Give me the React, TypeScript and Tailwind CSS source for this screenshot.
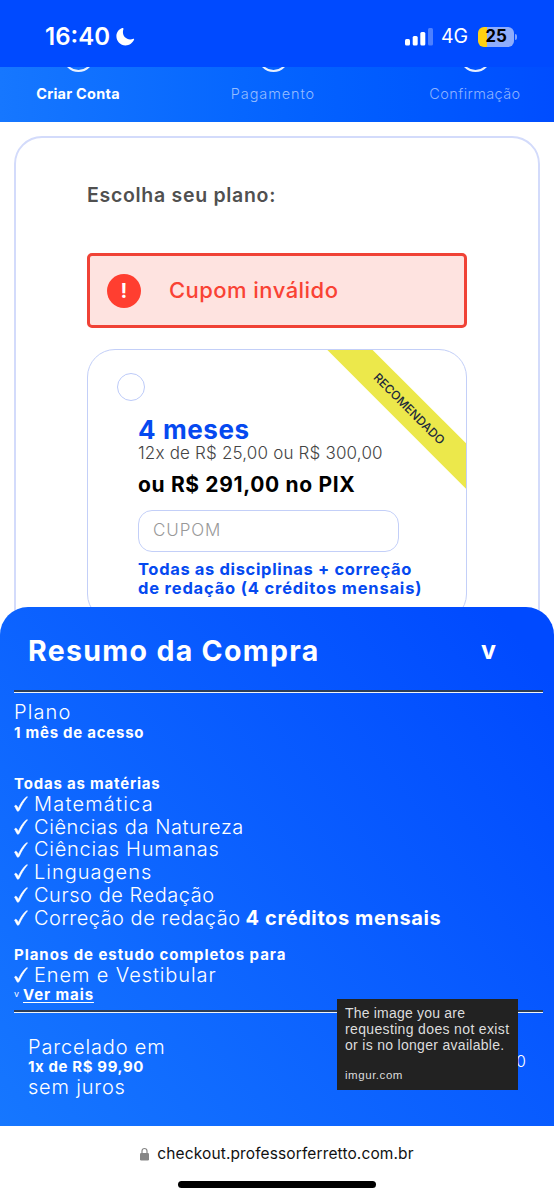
import { clsx } from 'clsx';

const STEPS = [
  { label: 'Criar Conta', className: 'font-bold text-white tracking-[0.25px]' },
  { label: 'Pagamento', className: 'font-light text-[#94bcff] tracking-[0.9px]' },
  { label: 'Confirmação', className: 'font-light text-[#8cb2ff] tracking-[0.4px] pl-1.5' },
];

const SUBJECTS = [
  { name: 'Matemática', tracking: 'tracking-[1.2px]' },
  { name: 'Ciências da Natureza', tracking: 'tracking-[0.6px]' },
  { name: 'Ciências Humanas', tracking: 'tracking-[0.75px]' },
  { name: 'Linguagens', tracking: 'tracking-[1px]' },
  { name: 'Curso de Redação', tracking: 'tracking-[0.55px]' },
];

function StatusBar() {
  return (
    <div className="flex h-[67px] shrink-0 items-center bg-[#004aff] pt-[7px] pl-[45px] text-white">
      <span className="w-[70px] text-[24px] font-semibold">16:40</span>
      <svg className="h-[20px] w-[20px]" viewBox="0 0 20 20" fill="currentColor">
        <path d="M7.3 1.1C3.9 2.2 1.4 5.4 1.4 9.3c0 5 4 9.1 9.1 9.1 3.9 0 7.3-2.5 8.6-5.9.2-.6-.3-1-.8-.8-1 .5-2 .7-3.1.7-4.2 0-7.3-3.1-7.3-7.3 0-1 .2-2 .5-2.9.3-.7-.4-1.3-1.1-1.1z" />
      </svg>
      <svg className="ml-[270px] h-[18px] w-[28px]" viewBox="0 0 28 18" fill="currentColor">
        <rect x="0" y="11" width="5" height="6.5" rx="1.5" />
        <rect x="7.7" y="8" width="5" height="9.5" rx="1.5" />
        <rect x="15.3" y="4" width="5" height="13.5" rx="1.5" />
        <rect x="23" y="0" width="5" height="17.5" rx="1.5" opacity=".3" />
      </svg>
      <span className="ml-[8px] w-[37px] text-[19.5px]">4G</span>
      <div className="flex h-[20px] w-[36px] items-center justify-center rounded-[6px] bg-linear-to-r from-[#ffd012] from-25% to-[#8fadfb] to-25% text-[17px] font-bold text-black">
        25
      </div>
      <div className="ml-px h-[6px] w-[2px] rounded-r-full bg-[#7fa4ff]" />
    </div>
  );
}

function Steps() {
  return (
    <div className="grid h-[55px] shrink-0 grid-cols-[156px_234px_164px] overflow-hidden bg-linear-to-r from-[#1677ff] to-[#004dff]">
      {STEPS.map((step) => (
        <div key={step.label} className={clsx('flex flex-col items-center text-[14.5px]', step.className)}>
          <div className="-mt-[26px] h-[31px] w-[31px] shrink-0 rounded-full border-2 border-white/90" />
          <span className="mt-[12px] leading-[20px]">{step.label}</span>
        </div>
      ))}
    </div>
  );
}

function PlanCard() {
  return (
    <div className="relative mt-[21px] h-[273px] overflow-hidden rounded-[28px] border border-[#c3cff8] pl-[50px]">
      <div className="mt-[23px] -ml-[21px] h-[28px] w-[28px] rounded-full border border-[#bccaf8]" />
      <h2 className="mt-[14px] text-[26px] leading-[30px] font-bold tracking-[0.6px] text-[#0549f0]">4 meses</h2>
      <p className="text-[17px] leading-[17px] font-light tracking-[0.18px] text-[#444]">12x de R$ 25,00 ou R$ 300,00</p>
      <p className="mt-[10px] text-[21px] leading-[26px] font-bold tracking-[0.65px] text-black">ou R$ 291,00 no PIX</p>
      <div className="mt-[12px] flex h-[42px] w-[261px] items-center rounded-[14px] border border-[#c3cff8] pl-[14px] text-[17px] font-light tracking-[0.9px] text-[#999]">
        CUPOM
      </div>
      <p className="mt-[8px] text-[16.5px] leading-[18.5px] font-bold whitespace-nowrap text-[#0549f0]">
        <span className="block tracking-[0.65px]">Todas as disciplinas + correção</span>
        <span className="block tracking-[0.82px]">de redação (4 créditos mensais)</span>
      </p>
      <div className="absolute top-[43px] left-[211px] h-[32px] w-[220px] rotate-45 bg-[#ece84b] text-center text-[12px] leading-[32px] font-medium text-[#1c2a3c]">
        RECOMENDADO
      </div>
    </div>
  );
}

function Check() {
  return (
    <svg
      className="mr-[6px] h-[16px] w-[14px] shrink-0"
      viewBox="0 0 14 16"
      fill="currentColor"
      stroke="currentColor"
      strokeWidth=".7"
      strokeLinejoin="round"
    >
      <path d="M.6 10c.8-.9 1.700-.8 2.300.1l1.500 2.300C6.400 7.900 9 4 12.200 1.100c.5-.4 1.100-.4 1.300-.3-3.500 4.200-6.200 8.700-8.300 13.500-.3.800-1.700 1.200-2.100.5z" />
    </svg>
  );
}

function Rule() {
  return <div className="ml-[14px] h-[3px] w-[529px] border-t-2 border-b border-t-[#2b3d58] border-b-[#eef3fa]" />;
}

function Summary() {
  return (
    <section className="relative z-10 -mt-[15px] h-[519px] shrink-0 rounded-t-[28px] bg-[linear-gradient(52deg,#1677ff,#004aff_94%)] text-white">
      <div className="flex h-[83px] items-center justify-between pt-[5px] pr-[58px] pl-[28px] font-bold">
        <h2 className="text-[28.5px] tracking-[1.3px]">Resumo da Compra</h2>
        <span className="text-[25px]">v</span>
      </div>
      <Rule />
      <div className="pl-[14px] text-[20px] font-light">
        <p className="mt-[8px] leading-[22px] tracking-[1.1px]">Plano</p>
        <p className="text-[15px] leading-[19px] font-bold tracking-[0.75px]">1 mês de acesso</p>
        <p className="mt-[32px] text-[15px] leading-[20px] font-bold tracking-[0.8px]">Todas as matérias</p>
        <ul className="-mt-px leading-[22.7px]">
          {SUBJECTS.map((subject) => (
            <li key={subject.name} className={clsx('flex items-center', subject.tracking)}>
              <Check />
              {subject.name}
            </li>
          ))}
          <li className="flex items-center tracking-[0.5px]">
            <Check />
            Correção de redação <b className="ml-[5px] font-bold tracking-[0.6px]">4 créditos mensais</b>
          </li>
        </ul>
        <p className="mt-[16px] text-[15px] leading-[20px] font-bold tracking-[0.95px]">Planos de estudo completos para</p>
        <p className="flex items-center leading-[20px] tracking-[0.9px]">
          <Check />
          Enem e Vestibular
        </p>
        <p className="flex text-[15px] leading-[20px] font-bold">
          <span className="w-[9px] text-[9px] leading-[17px] font-normal">v</span>
          <span className="tracking-[0.9px] underline underline-offset-2">Ver mais</span>
        </p>
      </div>
      <div className="mt-[5px]">
        <Rule />
      </div>
      <div className="flex justify-between pr-[28px] pl-[28px] text-[20px] font-light">
        <div className="mt-[24px] leading-[20px]">
          <p className="tracking-[0.85px]">Parcelado em</p>
          <p className="text-[15px] font-bold tracking-[0.6px]">1x de R$ 99,90</p>
          <p className="tracking-[0.8px]">sem juros</p>
        </div>
        <span className="mt-[38px] text-[16px] leading-[20px]">0</span>
      </div>
      <div className="absolute top-[392px] left-[337px] h-[91px] w-[181px] bg-[#222] pt-[6px] pl-[8px] font-['Liberation_Sans',sans-serif] text-[14px] leading-[16px] whitespace-nowrap text-[#ddd]">
        <p className="tracking-[0.2px]">The image you are</p>
        <p className="tracking-[0.35px]">requesting does not exist</p>
        <p className="tracking-[0.3px]">or is no longer available.</p>
        <p className="mt-[14px] text-[11.5px] tracking-[0.55px]">imgur.com</p>
      </div>
    </section>
  );
}

function BrowserBar() {
  return (
    <div className="flex h-[74px] shrink-0 flex-col items-center bg-white">
      <div className="mt-[18px] flex items-center gap-[8px] text-[15.5px] leading-[20px] tracking-[0.12px] text-[#111]">
        <svg className="h-[14px] w-[9px]" viewBox="0 0 9 14" fill="#858585">
          <path d="M2 7V4a2.5 2.5 0 0 1 5 0v3" fill="none" stroke="#858585" strokeWidth="1.2" />
          <rect x="0" y="6" width="9" height="7.5" rx="1.3" />
        </svg>
        checkout.professorferretto.com.br
      </div>
      <div className="mt-[17px] h-[7px] w-[198px] rounded-full bg-black" />
    </div>
  );
}

export default function App() {
  return (
    <div className="flex h-[1200px] w-[554px] flex-col overflow-hidden bg-white font-['Inter',sans-serif]">
      <StatusBar />
      <Steps />
      <main className="h-[500px] shrink-0 overflow-hidden px-[14px] pt-[14px]">
        <div className="h-[520px] rounded-[28px] border-2 border-[#d3dbfb] px-[71px] pt-[44px]">
          <h1 className="text-[19.5px] leading-[26px] font-semibold tracking-[0.7px] text-[#505050]">Escolha seu plano:</h1>
          <div className="mt-[45px] flex h-[75px] items-center rounded-[5px] border-3 border-[#f04236] bg-[#fee3e0] pl-[17px] text-[#f94234]">
            <div className="flex h-[34px] w-[34px] items-center justify-center rounded-full bg-[#ff3e30] text-[20px] font-bold text-white">
              !
            </div>
            <span className="-mt-px ml-[28px] text-[22px] font-medium tracking-[0.45px]">Cupom inválido</span>
          </div>
          <PlanCard />
        </div>
      </main>
      <Summary />
      <BrowserBar />
    </div>
  );
}
